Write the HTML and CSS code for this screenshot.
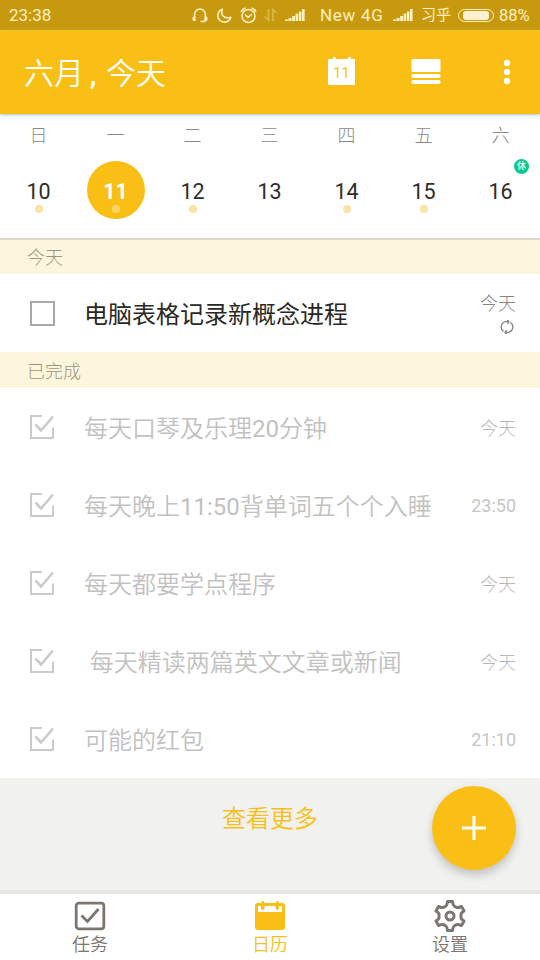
FILE: index.html
```html
<!DOCTYPE html>
<html lang="zh-CN">
<head>
<meta charset="utf-8">
<title>日历</title>
<link rel="stylesheet" href="styles.css">
</head>
<body>
<svg class="defs" width="0" height="0">
  <symbol id="signal" viewBox="0 0 20 12"><path d="M0 12V10.500h3.200V12zM3.600 12V9h3v3zM7.200 12V7H10v5zM10.600 12V4.500h2.700V12zM14 12V2.500h2.400V12zM17 12V0h2.600v12z"/></symbol>
  <symbol id="done" viewBox="0 0 26 26"><path d="M13 2H2v22h22V13.500" fill="none" stroke="currentColor" stroke-width="2"/><path d="M6.500 10.500l5.500 6L24 2.500" fill="none" stroke="currentColor" stroke-width="2.600"/></symbol>
</svg>
<div class="status">
  <span class="clock">23:38</span>
  <svg class="headset" width="16" height="16" viewBox="0 0 16 16"><path d="M2.500 13.500V8a5.500 6 0 0 1 11 0v5.500L12 14.500H8.500" fill="none" stroke="currentColor" stroke-width="1.600"/><path d="M.5 10.500L2 9.500h1.500V14H1.500L.5 13zM15.500 10.500L14 9.500h-1.500V14h2l1-1z"/></svg>
  <svg class="moon" width="15" height="15" viewBox="0 0 15 15"><path d="M5.500 1.200C3 8 7.500 11 13.800 9.200A6.600 6.600 0 1 1 5.500 1.200z" fill="none" stroke="currentColor" stroke-width="1.600" stroke-linejoin="round"/></svg>
  <svg class="alarm" width="17" height="17" viewBox="0 0 17 17"><g fill="none" stroke="currentColor" stroke-width="1.500"><circle cx="8.500" cy="9" r="6.500"/><path d="M1 5Q2 2 5.500 1M16 5Q15 2 11.500 1M5 7.500L8 10.500l4-3.500"/></g></svg>
  <svg class="arrows" width="14" height="14" viewBox="0 0 14 14"><path d="M4.500 1v11L.8 8.500M9 13V1.500L12.500 5" fill="none" stroke="currentColor" stroke-width="1.700"/></svg>
  <svg class="sig" width="20" height="12"><use href="#signal"/></svg>
  <span class="net">New 4G</span>
  <svg class="sig2" width="20" height="12"><use href="#signal"/></svg>
  <span class="carrier">习乎</span>
  <span class="battery"><i></i></span>
  <span class="percent">88%</span>
</div>
<header class="bar">
  <h1>六月<span class="comma">,</span>今天</h1>
  <div class="bar-cal">11</div>
  <svg class="bar-list" width="30" height="26" viewBox="0 0 30 26"><rect x=".5" y="0" width="29" height="13" rx="1.500"/><rect x=".5" y="15" width="29" height="4" rx="1.500"/><rect x=".5" y="21" width="29" height="4" rx="1.500"/></svg>
  <svg class="bar-more" width="8" height="26" viewBox="0 0 8 26"><circle cx="4" cy="4" r="3.200"/><circle cx="4" cy="13" r="3.200"/><circle cx="4" cy="22" r="3.200"/></svg>
</header>
<section class="week">
  <div class="day"><span class="name">日</span><span class="num dot">10</span></div>
  <div class="day"><span class="name">一</span><span class="num dot today">11</span></div>
  <div class="day"><span class="name">二</span><span class="num dot">12</span></div>
  <div class="day"><span class="name">三</span><span class="num">13</span></div>
  <div class="day"><span class="name">四</span><span class="num dot">14</span></div>
  <div class="day"><span class="name">五</span><span class="num dot">15</span></div>
  <div class="day"><span class="name">六</span><span class="num">16</span><span class="rest">休</span></div>
</section>
<main>
  <h2 class="first">今天</h2>
  <div class="task open">
    <span class="box"></span><span class="text">电脑表格记录新概念进程</span>
    <span class="when">今天<svg width="14" height="14" viewBox="0 0 14 14"><g fill="none" stroke="currentColor" stroke-width="1.300"><path d="M3.500 11.500A5.400 5.400 0 0 1 6 1.700h3M10.500 2.500A5.400 5.400 0 0 1 8 12.300H5M7 0l2 1.700L7.500 4M7 14l-2-1.700L6.500 10"/></g></svg></span>
  </div>
  <h2>已完成</h2>
  <div class="task"><svg class="tick"><use href="#done"/></svg><span class="text">每天口琴及乐理<b>20</b>分钟</span><span class="when">今天</span></div>
  <div class="task"><svg class="tick"><use href="#done"/></svg><span class="text">每天晚上<b>11:50</b>背单词五个个入睡</span><span class="when time">23:50</span></div>
  <div class="task"><svg class="tick"><use href="#done"/></svg><span class="text">每天都要学点程序</span><span class="when">今天</span></div>
  <div class="task"><svg class="tick"><use href="#done"/></svg><span class="text">&nbsp;每天精读两篇英文文章或新闻</span><span class="when">今天</span></div>
  <div class="task"><svg class="tick"><use href="#done"/></svg><span class="text">可能的红包</span><span class="when time">21:10</span></div>
</main>
<div class="more">查看更多</div>
<button class="add" aria-label="添加"><svg width="26" height="26" viewBox="0 0 26 26"><path d="M13 1v24M1 13h24" stroke="#fff" stroke-width="3"/></svg></button>
<nav>
  <a><svg width="32" height="30" viewBox="0 0 32 30"><rect x="2.200" y="2.200" width="27.600" height="25.600" rx="2.500" fill="none" stroke="currentColor" stroke-width="2.800"/><path d="M7.500 14.500l6 6L24.500 8" fill="none" stroke="currentColor" stroke-width="2.800"/></svg>任务</a>
  <a class="active"><svg width="32" height="30" viewBox="0 0 32 30"><path fill-rule="evenodd" d="M4 2h24q3 0 3 3v21q0 3-3 3H4q-3 0-3-3V5q0-3 3-3zM4 5v6h24V5h-3v2.500h-3.500V5h-11v2.500H7V5z"/><path d="M8.800 1.500v6M23.300 1.500v6" stroke="currentColor" stroke-width="2.800" stroke-linecap="round"/></svg>日历</a>
  <a><svg width="32" height="34" viewBox="0 0 32 34"><path d="M13.500 2.500h5q.3 3.500 1.500 4.300 1.500 1.200 3 1.700 1.500.3 4.500-1L30 12q-3 2-3 3.300v3.400q0 1.300 3 3.300l-2.500 4.500q-3-1.300-4.500-1-1.500.5-3 1.700-1.200.8-1.500 4.300h-5q-.3-3.500-1.500-4.300-1.500-1.200-3-1.700-1.500-.3-4.500 1L2 22q3-2 3-3.300v-3.400Q5 14 2 12l2.500-4.500q3 1.300 4.500 1 1.500-.5 3-1.700 1.200-.8 1.500-4.300z" fill="none" stroke="currentColor" stroke-width="3" stroke-linejoin="round"/><circle cx="16" cy="17" r="4" fill="none" stroke="currentColor" stroke-width="3"/></svg>设置</a>
</nav>
</body>
</html>
```
FILE: styles.css
```css
* { box-sizing: border-box; }
body {
  margin: 0; width: 540px; height: 960px; overflow: hidden; position: relative;
  display: flex; flex-direction: column; background: #fff;
  font-family: Roboto, "Noto Sans CJK SC", sans-serif; font-weight: 350;
}
svg { display: block; flex: none; fill: currentColor; }
b { font-weight: 400; }
.defs { position: absolute; }
.status {
  height: 30px; flex: none; background: #c7990f; color: #fff0bf;
  display: flex; align-items: center; padding-left: 9px;
  font-size: 17px; font-weight: 400; line-height: 31px; white-space: nowrap;
}
.clock { width: 183px; }
.headset { margin-right: 9px; }
.moon { margin-right: 8px; }
.alarm { margin-right: 7px; }
.arrows { margin-right: 7px; opacity: .35; }
.sig { margin-right: 15px; }
.net { width: 73px; letter-spacing: .7px; }
.sig2 { margin-right: 8px; }
.carrier { width: 37px; font-size: 15px; }
.battery { width: 36px; height: 13px; flex: none; border: 1px solid; border-radius: 7px; padding: 1px 4px; margin-right: 5px; }
.battery i { display: block; height: 9px; background: #fff0d0; border-radius: 3px; }
.percent { font-size: 16.500px; }
.bar {
  height: 84px; flex: none; background: #f9bf15; color: #fff; position: relative;
  display: flex; align-items: center; padding-left: 24px; box-shadow: 0 1px 3px #a9bfc4;
}
h1 { margin: 0; width: 304px; font-size: 30px; line-height: 40px; font-weight: 350; padding-top: 3px; }
.comma { display: inline-block; width: 22px; padding-right: 4px; text-align: center; font-weight: 500; }
.bar-cal {
  width: 27px; height: 26px; background: #fff; border-radius: 1px; color: #f9bf15;
  font-size: 15px; line-height: 28px; text-align: center; position: relative; font-weight: 400;
}
.bar-cal::before, .bar-cal::after { content: ""; position: absolute; top: -2px; left: 5px; width: 3px; height: 4px; background: #fff; border-radius: 1px; }
.bar-cal::after { left: 20px; }
.bar-list { margin-left: 56px; }
.bar-more { margin-left: 62px; }
.week { height: 126px; flex: none; display: grid; grid-template-columns: repeat(7, 1fr); padding-right: 1px; border-bottom: 2px solid #dfd9cd; }
.day { display: flex; flex-direction: column; align-items: center; position: relative; padding-top: 9px; }
.name { height: 38px; line-height: 26px; font-size: 18px; color: #8b8985; font-weight: 300; }
.num { width: 58px; height: 58px; border-radius: 50%; line-height: 61px; text-align: center; font-size: 21.500px; font-weight: 400; color: #302c28; position: relative; }
.today { background: #f9bf15; color: #fff; font-weight: 700; }
.dot::after { content: ""; position: absolute; left: 25px; top: 44px; width: 8px; height: 8px; border-radius: 50%; background: #fbe3a4; }
.today::after { background: #fcd564; }
.rest { position: absolute; left: 52px; top: 45px; width: 15px; height: 15px; border-radius: 50%; background: #0bc98b; color: #fff; font-size: 9px; line-height: 15px; text-align: center; font-weight: 500; }
h2 { margin: 0; height: 36px; background: #fef5dd; color: #9c9583; padding-left: 27px; font-size: 18px; line-height: 39px; font-weight: 300; }
h2.first { height: 34px; line-height: 35px; }
.task { height: 78px; display: flex; align-items: center; padding: 0 24px 0 29px; color: #c2c1bf; position: relative; }
.tick { width: 26px; height: 26px; color: #cccbc9; }
.box { width: 25px; height: 25px; border: 2px solid #aaa9a7; margin-left: 1px; }
.text { margin-left: 29px; font-size: 24px; line-height: 34px; padding-top: 3px; flex: 1; white-space: pre; }
.when { font-size: 18px; line-height: 24px; padding-top: 3px; font-weight: 300; color: #b8b7b5; }
.time { font-weight: 400; padding-top: 2px; color: #c6c5c3; }
.open { color: #2b2723; }
.open .text { font-weight: 400; }
.open .when { color: #85837f; display: flex; flex-direction: column; align-items: flex-end; padding-top: 0; }
.open .when svg { margin: 4px 2px 0 0; }
.more { height: 116px; flex: none; background: #f1f1ef; border-bottom: 4px solid #e7e6e3; color: #f9bf15; text-align: center; font-size: 24px; line-height: 82px; }
.add {
  position: absolute; left: 432px; top: 786px; width: 84px; height: 84px; padding: 0; border: 0; border-radius: 50%;
  background: #f9bf15; display: grid; place-items: center; box-shadow: 0 5px 10px #0003;
}
nav { flex: 1; display: grid; grid-template-columns: repeat(3, 1fr); background: #fff; }
nav a { display: flex; flex-direction: column; align-items: center; padding-top: 7px; color: #7d7670; font-size: 18px; line-height: 24px; }
nav svg { margin-bottom: 2px; }
nav a:last-child { padding-top: 5px; }
nav a:last-child svg { margin-bottom: 0; }
nav .active { color: #f9bf15; }
```
